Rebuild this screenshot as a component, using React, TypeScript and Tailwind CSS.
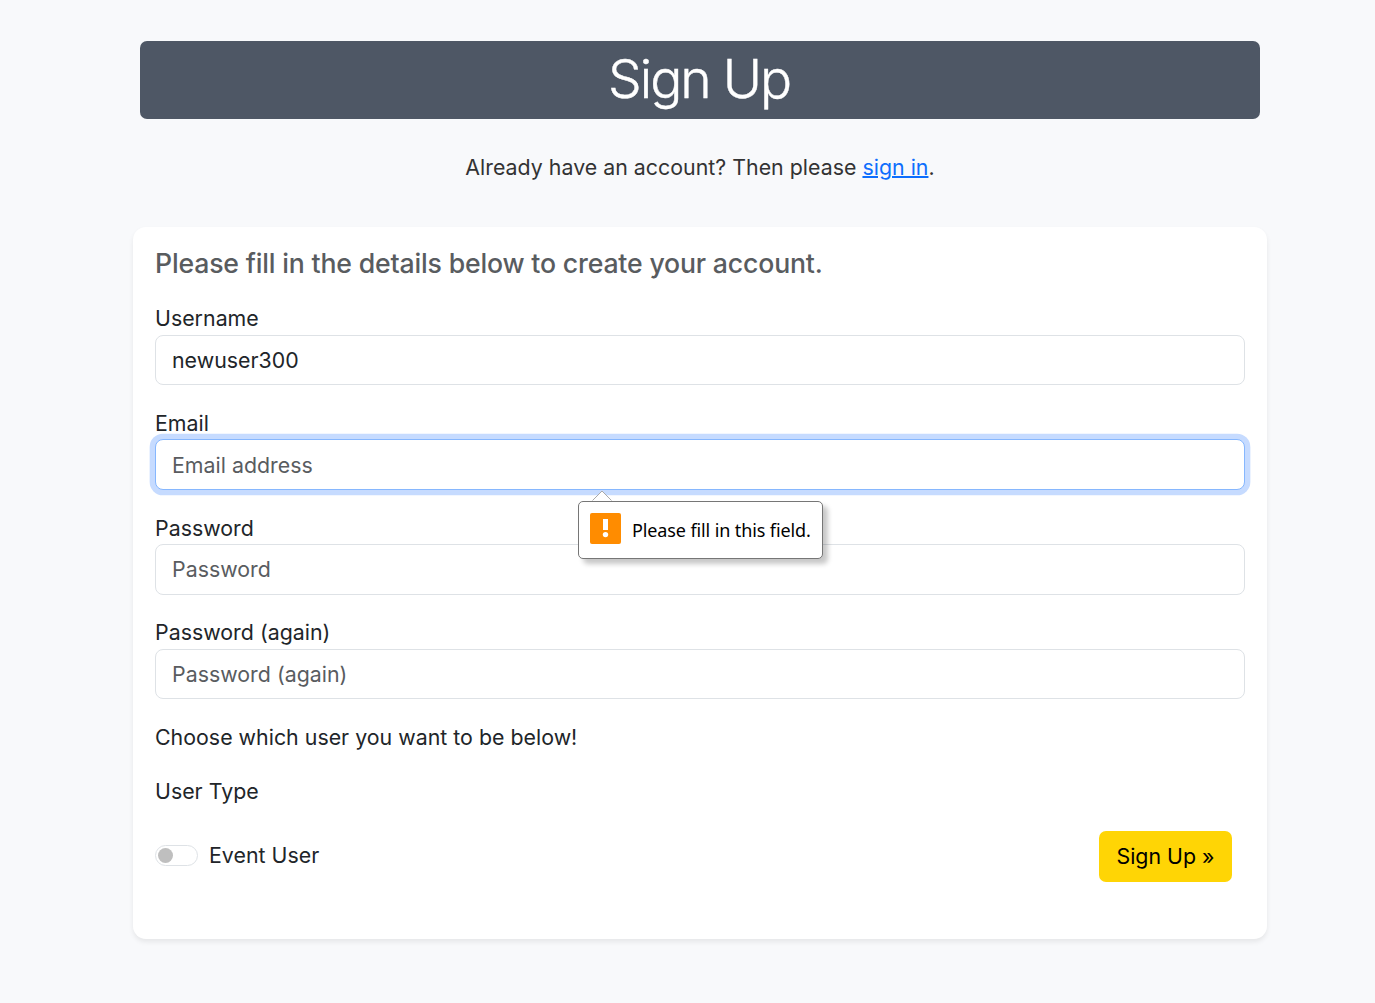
import React from "react";

type FieldProps = {
  id: string;
  label: string;
  type?: string;
  placeholder?: string;
  value?: string;
  focused?: boolean;
  children?: React.ReactNode;
};

function Field({ id, label, type = "text", placeholder, value, focused, children }: FieldProps) {
  return (
    <div className="relative flex h-[104.67px] flex-col">
      <label htmlFor={id} className="-mt-[0.2px] mb-[0.2px] block h-8 leading-8">
        {label}
      </label>
      <input
        id={id}
        type={type}
        placeholder={placeholder}
        defaultValue={value}
        className={
          "block h-[50.67px] w-full rounded-[8px] border bg-white px-4 text-[#212529] outline-none placeholder:text-[#595c5f] placeholder:opacity-100 " +
          (focused ? "border-[#86b7fe] shadow-[0_0_0_5.33px_#c6dbff]" : "border-[#dee2e6]")
        }
      />
      {children}
    </div>
  );
}

function ValidationBubble() {
  return (
    <div className="absolute top-[93.7px] left-[423px] z-10 flex h-[58px] w-[245px] items-center rounded-[5px] border border-[#767676] bg-white pl-[11px] shadow-[5px_5px_5px_rgba(0,0,0,0.22)]">
      <svg className="absolute -top-[12px] left-[13px]" width="20" height="13" viewBox="0 0 20 13">
        <path d="M0 11 10 1 20 11Z" fill="#fff" />
        <path d="M0.5 10.5 10 1 19.5 10.5" fill="none" stroke="#aaa" />
      </svg>
      <svg className="mb-[2px] shrink-0" width="31" height="31" viewBox="0 0 31 31">
        <rect width="31" height="31" rx="2" fill="#ff8c00" />
        <rect x="13" y="6" width="5" height="11" fill="#fff" />
        <circle cx="15.5" cy="21.6" r="2.7" fill="#fff" />
      </svg>
      <span className="ml-[11px] font-['Noto_Sans','Open_Sans',sans-serif] text-[18px] tracking-[-0.11px] whitespace-nowrap text-black">
        Please fill in this field.
      </span>
    </div>
  );
}

export default function App() {
  return (
    <main className="min-h-[1003px] bg-[#f8f9fb] pt-[41px] font-['Inter',sans-serif] text-[21.33px] leading-8 tracking-[0.02px] text-[#212529]">
      <div className="ml-[133px] w-[1134px]">
        <h1 className="mx-[7px] flex h-[78px] items-center justify-center rounded-[7px] bg-[#4e5765] pr-[2px] pb-[2px] text-[53.33px] font-light tracking-[-2px] text-white [-webkit-text-stroke:0.4px_white]">
          Sign Up
        </h1>
        <p className="mt-[32px] text-center text-[#333]">
          Already have an account? Then please{" "}
          <a href="#" className="text-[#0d6efd] underline decoration-2">
            sign in
          </a>
          .
        </p>
        <form noValidate className="mt-[44px] h-[712px] rounded-[13px] bg-white px-[22px] pt-[20.6px] shadow-[0_3px_5px_rgba(0,0,0,0.075)]">
          <h2 className="h-[55px] text-[26.67px] leading-[31px] font-medium tracking-[-0.18px] text-[#595c5f]">
            Please fill in the details below to create your account.
          </h2>
          <Field id="username" label="Username" value="newuser300" />
          <Field id="email" label="Email" type="email" placeholder="Email address" focused>
            <ValidationBubble />
          </Field>
          <Field id="password" label="Password" type="password" placeholder="Password" />
          <Field id="password-again" label="Password (again)" type="password" placeholder="Password (again)" />
          <p>Choose which user you want to be below!</p>
          <p className="mt-[22px]">User Type</p>
          <div className="mt-[23.5px] flex h-[51px] items-center justify-between pr-[13px]">
            <label className="flex items-center pb-[2px]">
              <span className="flex h-[21px] w-[43px] items-center rounded-full border border-[#dee2e6] bg-white pl-[2px]">
                <span className="size-[15px] rounded-full bg-[#bfbfbf]" />
              </span>
              <span className="ml-[11px]">Event User</span>
            </label>
            <button type="button" className="h-[51px] w-[133px] rounded-[7px] bg-[#ffd505] text-black">
              Sign Up »
            </button>
          </div>
        </form>
      </div>
    </main>
  );
}
